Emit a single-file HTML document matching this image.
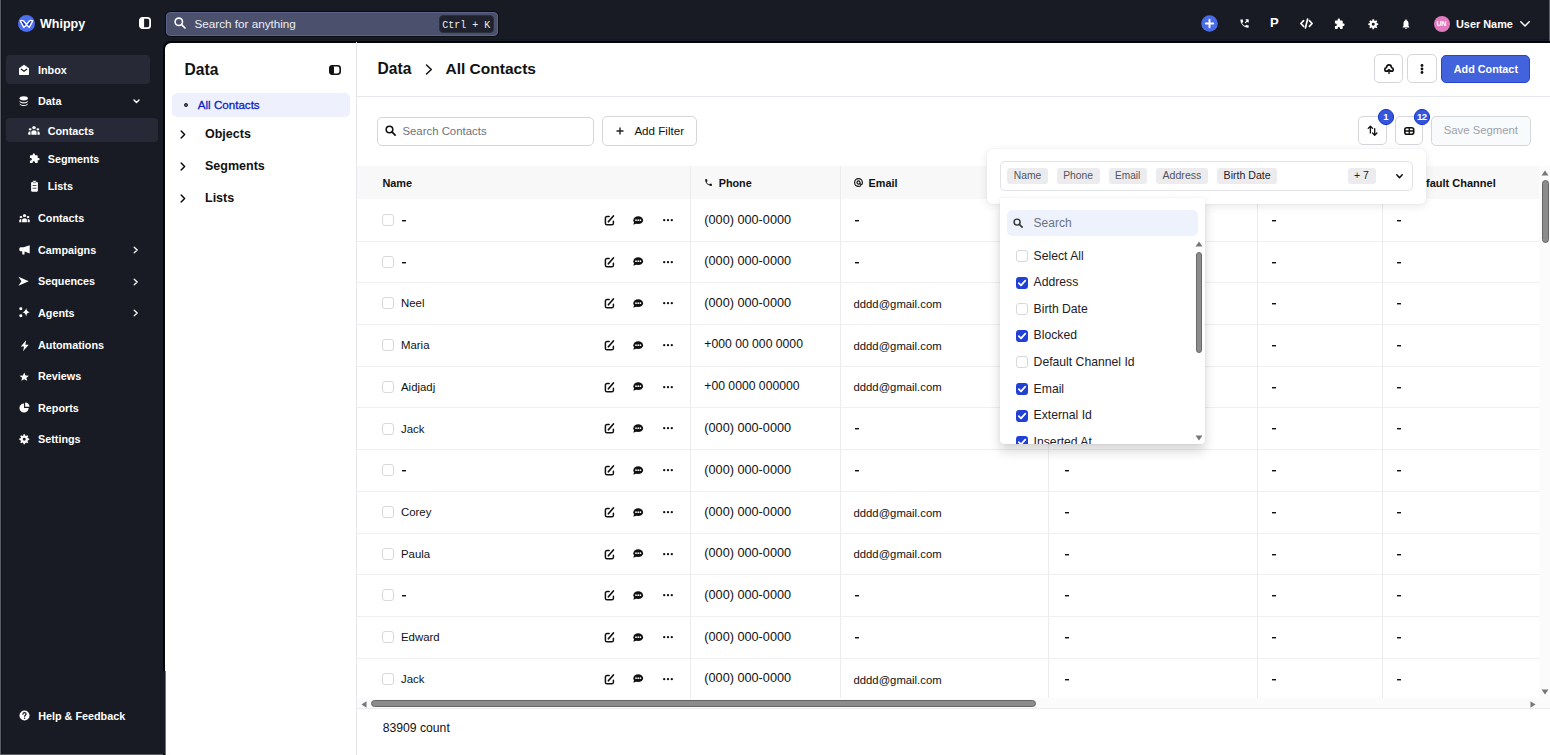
<!DOCTYPE html>
<html><head><meta charset="utf-8">
<style>
*{box-sizing:border-box;margin:0;padding:0}
html,body{width:1550px;height:755px;overflow:hidden;background:#181b23;font-family:"Liberation Sans",sans-serif;position:relative}
.a{position:absolute;white-space:nowrap}
.sb{position:absolute;font-weight:bold;font-size:10.8px;color:#fff;white-space:nowrap;line-height:13px}
.si{position:absolute;display:block;fill:#fff}
svg{display:block;overflow:visible}
.bt{position:absolute;border:1px solid #dcdde1;border-radius:4px;background:#fff}
.cell{position:absolute;font-size:12.7px;color:#111;white-space:nowrap;line-height:14px}
.cb{position:absolute;width:12px;height:12px;border:1px solid #d6d8dc;border-radius:3px;background:#fff}
.cbk{position:absolute;width:12px;height:12px;border-radius:3px;background:#2141d6}
.vl{position:absolute;width:1px;background:#ececee}
.hl{position:absolute;height:1px;background:#ececee}
.tag{position:absolute;height:16px;border-radius:3px;background:#ececef;font-size:10.3px;color:#4f5461;line-height:16px;white-space:nowrap}
.it{position:absolute;font-size:12.2px;color:#222;white-space:nowrap;line-height:14px}
</style></head><body>

<div class="a" style="left:0px;top:0px;width:1px;height:755px;background:#5b5e65"></div>
<div class="a" style="left:1px;top:0px;width:1px;height:755px;background:#13151c"></div>
<div class="a" style="left:0px;top:754px;width:165px;height:1px;background:#5b5e65"></div>
<div class="a" style="left:1549px;top:0px;width:1px;height:42px;background:#5b5e65"></div>
<div class="a" style="left:170px;top:39px;width:1379px;height:1px;background:#14161d"></div>
<svg class="a" style="left:18px;top:15px;" width="17" height="17" viewBox="0 0 17 17" preserveAspectRatio="none"><circle cx="8.5" cy="8.5" r="8.5" fill="#4c6ff0"/><path d="M2.3 5.8 C3.5 5.2 4.8 5.3 5.6 6 L8.5 9.6 L11.4 6 C12.2 5.3 13.5 5.2 14.7 5.8 L11.2 12.3 L8.5 9.9 L5.8 12.3 Z" fill="#1230d0" stroke="#fff" stroke-width="1.4" stroke-linejoin="round"/></svg>
<div class="a" style="left:40.00px;top:15.97px;font-size:12.5px;line-height:16px;color:#fff;font-weight:bold;">Whippy</div>
<svg class="a" style="left:139px;top:17px;" width="12" height="12" viewBox="0 0 12 12" preserveAspectRatio="none"><rect x="0.9" y="0.9" width="10.2" height="10.2" rx="2.6" fill="none" stroke="#fff" stroke-width="1.8"/><rect x="0.9" y="0.9" width="4.2" height="10.2" rx="1" fill="#fff"/></svg>
<div class="a" style="left:166px;top:12px;width:332px;height:24px;background:#4b506c;border:1px solid #5d6387;border-radius:4px;box-shadow:0 0 0 1px #0b0d12"></div>
<svg class="a" style="left:174px;top:17px;" width="12" height="12" viewBox="0 0 12 12" preserveAspectRatio="none"><circle cx="4.8" cy="4.8" r="3.7" fill="none" stroke="#fff" stroke-width="1.6"/><path d="M7.6 7.6 L11 11" stroke="#fff" stroke-width="1.7" stroke-linecap="round"/></svg>
<div class="a" style="left:194.50px;top:16.45px;font-size:11.7px;line-height:15px;color:#eceef4;font-weight:normal;">Search for anything</div>
<div class="a" style="left:439px;top:15px;width:55px;height:18px;background:#1f222d;border:1px solid #2c303e;border-radius:4px"></div>
<div class="a" style="left:442.30px;top:19.54px;font-size:10px;line-height:12px;color:#eceef4;font-weight:normal;font-family:'Liberation Mono',monospace;">Ctrl + K</div>
<svg class="a" style="left:1201px;top:15px;" width="17" height="17" viewBox="0 0 17 17" preserveAspectRatio="none"><circle cx="8.5" cy="8.5" r="8.3" fill="#4a6be6"/><path d="M8.5 4.8 V12.2 M4.8 8.5 H12.2" stroke="#fff" stroke-width="1.9" stroke-linecap="round"/></svg>
<svg class="a" style="left:1239px;top:18px;" width="11" height="11" viewBox="0 0 24 24" preserveAspectRatio="none"><path d="M6.6 10.8c1.4 2.8 3.8 5.1 6.6 6.6l2.2-2.2c.3-.3.7-.4 1-.2 1.1.4 2.3.6 3.6.6.6 0 1 .4 1 1V20c0 .6-.4 1-1 1C10.6 21 3 13.4 3 4c0-.6.4-1 1-1h3.5c.6 0 1 .4 1 1 0 1.3.2 2.5.6 3.6.1.3 0 .7-.2 1z" fill="#fff"/><path d="M14 10 L20 4 M15.5 4 H20 V8.5" stroke="#fff" stroke-width="2.4" fill="none" stroke-linecap="round" stroke-linejoin="round"/></svg>
<div class="a" style="left:1270.00px;top:15.10px;font-size:13px;line-height:16px;color:#fff;font-weight:bold;">P</div>
<svg class="a" style="left:1300px;top:18px;" width="13" height="11" viewBox="0 0 13 11" preserveAspectRatio="none"><path d="M3.6 2.6 L0.9 5.5 L3.6 8.4 M9.4 2.6 L12.1 5.5 L9.4 8.4 M7.6 1 L5.4 10" stroke="#fff" stroke-width="1.7" fill="none" stroke-linecap="round" stroke-linejoin="round"/></svg>
<svg class="a" style="left:1334px;top:18px;" width="11" height="12" viewBox="0 0 24 24" preserveAspectRatio="none"><path d="M20.5 11H19V7c0-1.1-.9-2-2-2h-4V3.5C13 2.1 11.9 1 10.5 1S8 2.1 8 3.5V5H4c-1.1 0-2 .9-2 2v3.8h1.5c1.5 0 2.7 1.2 2.7 2.7S5 16.2 3.5 16.2H2V20c0 1.1.9 2 2 2h3.8v-1.5c0-1.5 1.2-2.7 2.7-2.7s2.7 1.2 2.7 2.7V22H17c1.1 0 2-.9 2-2v-4h1.5c1.4 0 2.5-1.1 2.5-2.5S21.9 11 20.5 11z" fill="#fff"/></svg>
<svg class="a" style="left:1367.5px;top:18.5px;" width="10.5" height="10.5" viewBox="0 0 24 24" preserveAspectRatio="none"><path fill-rule="evenodd" d="M20.34 9.91 L23.34 10.11 L23.34 13.89 L20.34 14.09 L19.37 16.42 L21.36 18.69 L18.69 21.36 L16.42 19.37 L14.09 20.34 L13.89 23.34 L10.11 23.34 L9.91 20.34 L7.58 19.37 L5.31 21.36 L2.64 18.69 L4.63 16.42 L3.66 14.09 L0.66 13.89 L0.66 10.11 L3.66 9.91 L4.63 7.58 L2.64 5.31 L5.31 2.64 L7.58 4.63 L9.91 3.66 L10.11 0.66 L13.89 0.66 L14.09 3.66 L16.42 4.63 L18.69 2.64 L21.36 5.31 L19.37 7.58Z M15.4 12 A3.4 3.4 0 1 0 8.6 12 A3.4 3.4 0 1 0 15.4 12Z" fill="#fff"/></svg>
<svg class="a" style="left:1401px;top:18px;" width="10" height="12" viewBox="0 0 24 24" preserveAspectRatio="none"><path d="M12 22c1.1 0 2-.9 2-2h-4c0 1.1.9 2 2 2zm6-6v-5c0-3.07-1.64-5.64-4.5-6.32V4c0-.83-.67-1.5-1.5-1.5s-1.5.67-1.5 1.5v.68C7.63 5.36 6 7.92 6 11v5l-2 2v1h16v-1l-2-2z" fill="#fff"/></svg>
<svg class="a" style="left:1434px;top:16px;" width="16" height="16" viewBox="0 0 16 16" preserveAspectRatio="none"><circle cx="8" cy="8" r="8" fill="#e27ac0"/></svg>
<div class="a" style="left:1436.60px;top:19.27px;font-size:7px;line-height:9px;color:#fff;font-weight:bold;letter-spacing:-0.3px">UN</div>
<div class="a" style="left:1456.00px;top:16.82px;font-size:10.9px;line-height:14px;color:#fff;font-weight:bold;">User Name</div>
<svg class="a" style="left:1520px;top:21px;" width="10" height="6" viewBox="0 0 10 6" preserveAspectRatio="none"><path d="M0.8 0.8 L5 5 L9.2 0.8" stroke="#fff" stroke-width="1.5" fill="none" stroke-linecap="round" stroke-linejoin="round"/></svg>
<div class="a" style="left:6px;top:55px;width:144px;height:29px;background:#272a36;border-radius:4px"></div>
<div class="a" style="left:6px;top:118px;width:152px;height:24px;background:#272a36;border-radius:4px"></div>
<svg class="a" style="left:18px;top:64px;" width="12" height="12" viewBox="0 0 24 24" preserveAspectRatio="none"><path d="M12 1.5 L22 8.5 V20 c0 1.1-.9 2-2 2 H4 c-1.1 0-2-.9-2-2 V8.5 Z" fill="#fff"/><path d="M6.5 10.5 L12 14.5 L17.5 10.5" stroke="#181b23" stroke-width="2.4" fill="none" stroke-linecap="round" stroke-linejoin="round"/></svg>
<div class="a" style="left:38.00px;top:62.86px;font-size:10.8px;line-height:14px;color:#fff;font-weight:bold;">Inbox</div>
<svg class="a" style="left:19px;top:96px;" width="9.5" height="10" viewBox="0 0 24 24" preserveAspectRatio="none"><ellipse cx="12" cy="5.5" rx="10.5" ry="5" fill="#fff"/><path d="M1.5 10.8 c1.2 2.6 5 4.2 10.5 4.2 s9.3-1.6 10.5-4.2 V13.2 c-1.2 3-5 4.6-10.5 4.6 s-9.3-1.6-10.5-4.6Z" fill="#fff"/><path d="M1.5 17.4 c1.2 2.6 5 4.2 10.5 4.2 s9.3-1.6 10.5-4.2 V19.4 c-1.2 3-5 4.6-10.5 4.6 s-9.3-1.6-10.5-4.6Z" fill="#fff"/></svg>
<div class="a" style="left:38.00px;top:94.26px;font-size:10.8px;line-height:14px;color:#fff;font-weight:bold;">Data</div>
<svg class="a" style="left:27.5px;top:125.5px;" width="12" height="9.5" viewBox="0 0 24 24" preserveAspectRatio="none"><circle cx="12" cy="4.5" r="3.6" fill="#fff"/><circle cx="4.3" cy="8.3" r="2.9" fill="#fff"/><circle cx="19.7" cy="8.3" r="2.9" fill="#fff"/><path d="M6.8 22 v-6 c0-2.9 2.3-5 5.2-5 s5.2 2.1 5.2 5 V22 Z" fill="#fff"/><path d="M0.5 22 v-4 c0-3 1.7-5 4.3-5 L5.2 22Z" fill="#fff"/><path d="M23.5 22 v-4 c0-3-1.7-5-4.3-5 L18.8 22Z" fill="#fff"/></svg>
<div class="a" style="left:47.70px;top:123.76px;font-size:10.8px;line-height:14px;color:#fff;font-weight:bold;">Contacts</div>
<svg class="a" style="left:28.5px;top:152.5px;" width="11" height="11" viewBox="0 0 24 24" preserveAspectRatio="none"><path d="M20.5 11H19V7c0-1.1-.9-2-2-2h-4V3.5C13 2.1 11.9 1 10.5 1S8 2.1 8 3.5V5H4c-1.1 0-2 .9-2 2v3.8h1.5c1.5 0 2.7 1.2 2.7 2.7S5 16.2 3.5 16.2H2V20c0 1.1.9 2 2 2h3.8v-1.5c0-1.5 1.2-2.7 2.7-2.7s2.7 1.2 2.7 2.7V22H17c1.1 0 2-.9 2-2v-4h1.5c1.4 0 2.5-1.1 2.5-2.5S21.9 11 20.5 11z" fill="#fff"/></svg>
<div class="a" style="left:47.70px;top:151.56px;font-size:10.8px;line-height:14px;color:#fff;font-weight:bold;">Segments</div>
<svg class="a" style="left:30px;top:179.5px;" width="9" height="12" viewBox="0 0 24 24" preserveAspectRatio="none"><rect x="3" y="3.5" width="18" height="20" rx="3" fill="#fff"/><rect x="8" y="1" width="8" height="4.5" rx="1.5" fill="#fff" stroke="#181b23" stroke-width="1.2"/><path d="M7 11 H17 M7 16.5 H17" stroke="#181b23" stroke-width="1.8"/></svg>
<div class="a" style="left:47.70px;top:179.46px;font-size:10.8px;line-height:14px;color:#fff;font-weight:bold;">Lists</div>
<svg class="a" style="left:18.5px;top:213.5px;" width="11" height="9" viewBox="0 0 24 24" preserveAspectRatio="none"><circle cx="12" cy="4.5" r="3.6" fill="#fff"/><circle cx="4.3" cy="8.3" r="2.9" fill="#fff"/><circle cx="19.7" cy="8.3" r="2.9" fill="#fff"/><path d="M6.8 22 v-6 c0-2.9 2.3-5 5.2-5 s5.2 2.1 5.2 5 V22 Z" fill="#fff"/><path d="M0.5 22 v-4 c0-3 1.7-5 4.3-5 L5.2 22Z" fill="#fff"/><path d="M23.5 22 v-4 c0-3-1.7-5-4.3-5 L18.8 22Z" fill="#fff"/></svg>
<div class="a" style="left:38.00px;top:211.46px;font-size:10.8px;line-height:14px;color:#fff;font-weight:bold;">Contacts</div>
<svg class="a" style="left:18.5px;top:244.5px;" width="11" height="10" viewBox="0 0 11 10" preserveAspectRatio="none"><path d="M10.7 0.2 V8.5 L5.6 6.5 L5.5 9.6 H3.3 L3.2 6.3 H1.8 C0.9 6.3 0.3 5.5 0.3 4.4 C0.3 3.2 0.9 2.3 1.8 2.3 H4.6 Z" fill="#fff"/></svg>
<div class="a" style="left:38.00px;top:243.06px;font-size:10.8px;line-height:14px;color:#fff;font-weight:bold;">Campaigns</div>
<svg class="a" style="left:18px;top:275.5px;" width="11" height="10.5" viewBox="0 0 24 24" preserveAspectRatio="none"><path d="M1 1.5 L23.5 12 L1 22.5 L7.5 12Z" fill="#fff"/></svg>
<div class="a" style="left:38.00px;top:274.26px;font-size:10.8px;line-height:14px;color:#fff;font-weight:bold;">Sequences</div>
<svg class="a" style="left:18.5px;top:306.5px;" width="11" height="10.5" viewBox="0 0 24 24" preserveAspectRatio="none"><path d="M15.5 2.5 Q16.5 10.5 23.5 12 Q16.5 13.5 15.5 21.5 Q14.5 13.5 7.5 12 Q14.5 10.5 15.5 2.5Z" fill="#fff"/><circle cx="4" cy="4" r="3.4" fill="#fff"/><circle cx="4" cy="20" r="3.4" fill="#fff"/></svg>
<div class="a" style="left:38.00px;top:306.06px;font-size:10.8px;line-height:14px;color:#fff;font-weight:bold;">Agents</div>
<svg class="a" style="left:19.5px;top:339.5px;" width="9.5" height="11.5" viewBox="0 0 24 24" preserveAspectRatio="none"><path d="M15.5 0.5 L2 13.8 H10.5 L7.5 23.5 L22 9.8 H13.5 Z" fill="#fff"/></svg>
<div class="a" style="left:38.00px;top:337.66px;font-size:10.8px;line-height:14px;color:#fff;font-weight:bold;">Automations</div>
<svg class="a" style="left:19px;top:371.5px;" width="10.5" height="9.5" viewBox="0 0 24 24" preserveAspectRatio="none"><path d="M12 1.5 L15 8.6 L22.8 9.3 L16.9 14.4 L18.7 22 L12 18 L5.3 22 L7.1 14.4 L1.2 9.3 L9 8.6Z" fill="#fff"/></svg>
<div class="a" style="left:38.00px;top:369.26px;font-size:10.8px;line-height:14px;color:#fff;font-weight:bold;">Reviews</div>
<svg class="a" style="left:18.5px;top:402px;" width="11" height="11" viewBox="0 0 24 24" preserveAspectRatio="none"><path d="M11 3 A10 10 0 1 0 21 13 H11Z" fill="#fff"/><path d="M13.5 1 A9.5 9.5 0 0 1 23 10.5 H13.5Z" fill="#fff"/></svg>
<div class="a" style="left:38.00px;top:400.86px;font-size:10.8px;line-height:14px;color:#fff;font-weight:bold;">Reports</div>
<svg class="a" style="left:19px;top:434px;" width="10.5" height="10.5" viewBox="0 0 24 24" preserveAspectRatio="none"><path fill-rule="evenodd" d="M20.34 9.91 L23.34 10.11 L23.34 13.89 L20.34 14.09 L19.37 16.42 L21.36 18.69 L18.69 21.36 L16.42 19.37 L14.09 20.34 L13.89 23.34 L10.11 23.34 L9.91 20.34 L7.58 19.37 L5.31 21.36 L2.64 18.69 L4.63 16.42 L3.66 14.09 L0.66 13.89 L0.66 10.11 L3.66 9.91 L4.63 7.58 L2.64 5.31 L5.31 2.64 L7.58 4.63 L9.91 3.66 L10.11 0.66 L13.89 0.66 L14.09 3.66 L16.42 4.63 L18.69 2.64 L21.36 5.31 L19.37 7.58Z M15.4 12 A3.4 3.4 0 1 0 8.6 12 A3.4 3.4 0 1 0 15.4 12Z" fill="#fff"/></svg>
<div class="a" style="left:38.00px;top:432.46px;font-size:10.8px;line-height:14px;color:#fff;font-weight:bold;">Settings</div>
<svg class="a" style="left:18.5px;top:709.5px;" width="11" height="11" viewBox="0 0 24 24" preserveAspectRatio="none"><circle cx="12" cy="12" r="11" fill="#fff"/><path d="M8.6 9.2 c0-2 1.5-3.4 3.5-3.4 s3.4 1.3 3.4 3.1 c0 2.4-3.2 2.6-3.2 5" stroke="#181b23" stroke-width="2.6" fill="none" stroke-linecap="round"/><circle cx="12.3" cy="18" r="1.6" fill="#181b23"/></svg>
<div class="a" style="left:38.20px;top:709.26px;font-size:10.8px;line-height:14px;color:#fff;font-weight:bold;">Help &amp; Feedback</div>
<svg class="a" style="left:132.5px;top:98.5px;" width="7" height="5" viewBox="0 0 7 5" preserveAspectRatio="none"><path d="M1 1 L3.5 3.6 L6 1" stroke="#fff" stroke-width="1.4" fill="none" stroke-linecap="round" stroke-linejoin="round"/></svg>
<svg class="a" style="left:133px;top:246px;" width="5.5" height="8" viewBox="0 0 5.5 8" preserveAspectRatio="none"><path d="M1.2 1.2 L4.2 4 L1.2 6.8" stroke="#fff" stroke-width="1.3" fill="none" stroke-linecap="round" stroke-linejoin="round"/></svg>
<svg class="a" style="left:133px;top:277.5px;" width="5.5" height="8" viewBox="0 0 5.5 8" preserveAspectRatio="none"><path d="M1.2 1.2 L4.2 4 L1.2 6.8" stroke="#fff" stroke-width="1.3" fill="none" stroke-linecap="round" stroke-linejoin="round"/></svg>
<svg class="a" style="left:133px;top:309px;" width="5.5" height="8" viewBox="0 0 5.5 8" preserveAspectRatio="none"><path d="M1.2 1.2 L4.2 4 L1.2 6.8" stroke="#fff" stroke-width="1.3" fill="none" stroke-linecap="round" stroke-linejoin="round"/></svg>
<div class="a" style="left:163px;top:41px;width:1387px;height:714px;background:#fff;border-left:2px solid #050609;border-top:2px solid #050609;border-top-left-radius:8px"></div>
<div class="a" style="left:184.50px;top:59.99px;font-size:15.6px;line-height:20px;color:#111;font-weight:bold;">Data</div>
<svg class="a" style="left:329px;top:65px;" width="12" height="10" viewBox="0 0 12 10" preserveAspectRatio="none"><rect x="0.8" y="0.8" width="10.4" height="8.4" rx="2.6" fill="none" stroke="#111" stroke-width="1.6"/><rect x="0.8" y="0.8" width="4.2" height="8.4" rx="1.5" fill="#111"/></svg>
<div class="a" style="left:172px;top:93px;width:178px;height:24px;background:#eef1fd;border-radius:5px"></div>
<svg class="a" style="left:184px;top:103px;" width="4" height="4" viewBox="0 0 4 4" preserveAspectRatio="none"><circle cx="2" cy="2" r="1.6" fill="#555" stroke="#111" stroke-width="0.8"/></svg>
<div class="a" style="left:197.80px;top:97.98px;font-size:11.6px;line-height:14px;color:#0b1fc4;font-weight:normal;-webkit-text-stroke:0.3px #0b1fc4">All Contacts</div>
<div class="a" style="left:205.00px;top:125.97px;font-size:12.5px;line-height:16px;color:#111;font-weight:bold;">Objects</div>
<svg class="a" style="left:179.5px;top:130.0px;" width="6" height="9" viewBox="0 0 6 9" preserveAspectRatio="none"><path d="M1.2 1 L4.6 4.5 L1.2 8" stroke="#111" stroke-width="1.6" fill="none" stroke-linecap="round" stroke-linejoin="round"/></svg>
<div class="a" style="left:205.00px;top:157.97px;font-size:12.5px;line-height:16px;color:#111;font-weight:bold;">Segments</div>
<svg class="a" style="left:179.5px;top:162.0px;" width="6" height="9" viewBox="0 0 6 9" preserveAspectRatio="none"><path d="M1.2 1 L4.6 4.5 L1.2 8" stroke="#111" stroke-width="1.6" fill="none" stroke-linecap="round" stroke-linejoin="round"/></svg>
<div class="a" style="left:205.00px;top:189.67px;font-size:12.5px;line-height:16px;color:#111;font-weight:bold;">Lists</div>
<svg class="a" style="left:179.5px;top:193.5px;" width="6" height="9" viewBox="0 0 6 9" preserveAspectRatio="none"><path d="M1.2 1 L4.6 4.5 L1.2 8" stroke="#111" stroke-width="1.6" fill="none" stroke-linecap="round" stroke-linejoin="round"/></svg>
<div class="a" style="left:356px;top:42px;width:1px;height:713px;background:#e6e7ea"></div>
<div class="a" style="left:357px;top:96px;width:1193px;height:1px;background:#e6e7ea"></div>
<div class="a" style="left:377.50px;top:58.69px;font-size:15.6px;line-height:20px;color:#111;font-weight:bold;">Data</div>
<svg class="a" style="left:424.5px;top:64px;" width="8" height="11" viewBox="0 0 8 11" preserveAspectRatio="none"><path d="M1.5 1 L6.3 5.5 L1.5 10" stroke="#111" stroke-width="1.5" fill="none" stroke-linecap="round" stroke-linejoin="round"/></svg>
<div class="a" style="left:445.50px;top:59.23px;font-size:15.5px;line-height:19px;color:#111;font-weight:bold;">All Contacts</div>
<div class="a" style="left:1374px;top:54px;width:29px;height:29px;border:1px solid #d5d7db;border-radius:5px;background:#fff"></div>
<svg class="a" style="left:1384px;top:64px;" width="10" height="10" viewBox="0 0 10 10" preserveAspectRatio="none"><path d="M3.6 7.2 H2.5 C1.4 7.2 0.8 6.4 0.8 5.5 C0.8 4.5 1.5 3.8 2.4 3.7 C2.6 2.1 3.6 0.9 5 0.9 C6.4 0.9 7.4 2.1 7.6 3.6 C8.6 3.7 9.2 4.5 9.2 5.5 C9.2 6.5 8.5 7.2 7.5 7.2 H6.4" stroke="#111" stroke-width="1.7" fill="none" stroke-linecap="round" stroke-linejoin="round"/><path d="M5 9.6 V5.6 M3.3 7 L5 5.4 L6.7 7" stroke="#111" stroke-width="1.4" fill="none" stroke-linecap="round" stroke-linejoin="round"/></svg>
<div class="a" style="left:1407px;top:54px;width:30px;height:29px;border:1px solid #d5d7db;border-radius:5px;background:#fff"></div>
<svg class="a" style="left:1420px;top:64px;" width="4" height="10" viewBox="0 0 4 10" preserveAspectRatio="none"><circle cx="2" cy="1.5" r="1.4" fill="#111"/><circle cx="2" cy="5" r="1.4" fill="#111"/><circle cx="2" cy="8.5" r="1.4" fill="#111"/></svg>
<div class="a" style="left:1441px;top:55px;width:89px;height:28px;background:#4263dc;border:1px solid #2546d4;border-radius:5px"></div>
<div class="a" style="left:1453.80px;top:62.26px;font-size:10.8px;line-height:14px;color:#fff;font-weight:bold;">Add Contact</div>
<div class="a" style="left:377px;top:117px;width:217px;height:29px;border:1px solid #d5d7db;border-radius:5px;background:#fff"></div>
<svg class="a" style="left:385px;top:125px;" width="11" height="11" viewBox="0 0 12 12" preserveAspectRatio="none"><circle cx="4.9" cy="4.9" r="3.6" fill="none" stroke="#111" stroke-width="1.7"/><path d="M7.6 7.6 L11 11" stroke="#111" stroke-width="1.9" stroke-linecap="round"/></svg>
<div class="a" style="left:402.40px;top:123.85px;font-size:11.4px;line-height:14px;color:#6b7280;font-weight:normal;">Search Contacts</div>
<div class="a" style="left:602px;top:116px;width:95px;height:30px;border:1px solid #d5d7db;border-radius:5px;background:#fff"></div>
<svg class="a" style="left:616px;top:127px;" width="8" height="8" viewBox="0 0 8 8" preserveAspectRatio="none"><path d="M4 0.5 V7.5 M0.5 4 H7.5" stroke="#222" stroke-width="1.4"/></svg>
<div class="a" style="left:634.40px;top:123.78px;font-size:11.6px;line-height:14px;color:#111;font-weight:normal;">Add Filter</div>
<div class="a" style="left:1358px;top:116px;width:29px;height:29px;border:1px solid #d5d7db;border-radius:5px;background:#fff"></div>
<svg class="a" style="left:1367px;top:125px;" width="11" height="11" viewBox="0 0 11 11" preserveAspectRatio="none"><path d="M3.4 7.9 V1.4 M1.2 3.4 L3.4 1.2 L5.6 3.4 M7.7 3.6 V10 M5.5 8 L7.7 10.2 L9.9 8" stroke="#111" stroke-width="1.3" fill="none" stroke-linecap="round" stroke-linejoin="round"/></svg>
<div class="a" style="left:1395px;top:116px;width:28px;height:29px;border:1px solid #d5d7db;border-radius:5px;background:#fff"></div>
<svg class="a" style="left:1403.5px;top:127px;" width="10.5" height="8" viewBox="0 0 10.5 8" preserveAspectRatio="none"><rect x="0.8" y="0.8" width="8.9" height="6.4" rx="2" fill="none" stroke="#111" stroke-width="1.6"/><path d="M0.8 4 H9.7 M5.25 0.8 V7.2" stroke="#111" stroke-width="1.3"/></svg>
<div class="a" style="left:1431px;top:116px;width:100px;height:30px;border:1px solid #d5d7db;border-radius:5px;background:#f9fafb"></div>
<div class="a" style="left:1443.80px;top:123.48px;font-size:11.3px;line-height:14px;color:#9ca1ab;font-weight:normal;">Save Segment</div>
<svg class="a" style="left:1378px;top:109px;" width="16" height="16" viewBox="0 0 16 16" preserveAspectRatio="none"><circle cx="8" cy="8" r="7.6" fill="#3656da" stroke="#1534cf" stroke-width="1"/></svg>
<div class="a" style="left:1383.15px;top:111.21px;font-size:9.5px;line-height:12px;color:#fff;font-weight:bold;letter-spacing:0px">1</div>
<svg class="a" style="left:1414px;top:109px;" width="16" height="16" viewBox="0 0 16 16" preserveAspectRatio="none"><circle cx="8" cy="8" r="7.6" fill="#3656da" stroke="#1534cf" stroke-width="1"/></svg>
<div class="a" style="left:1417.05px;top:111.21px;font-size:9.5px;line-height:12px;color:#fff;font-weight:bold;letter-spacing:-0.6px">12</div>
<div class="a" style="left:382.70px;top:721.47px;font-size:12.2px;line-height:15px;color:#111;font-weight:normal;">83909 count</div>
<div class="a" style="left:357px;top:166px;width:1182px;height:33px;background:#f8f8f9"></div>
<div class="a" style="left:1539px;top:166px;width:11px;height:532px;background:#fbfbfb"></div>
<div class="a" style="left:690px;top:166px;width:1px;height:532px;background:#ececee"></div>
<div class="a" style="left:840px;top:166px;width:1px;height:532px;background:#ececee"></div>
<div class="a" style="left:1048px;top:166px;width:1px;height:532px;background:#ececee"></div>
<div class="a" style="left:1257px;top:166px;width:1px;height:532px;background:#ececee"></div>
<div class="a" style="left:1382px;top:166px;width:1px;height:532px;background:#ececee"></div>
<div class="a" style="left:357px;top:240.50px;width:1182px;height:1px;background:#efeff1"></div>
<div class="a" style="left:357px;top:282.22px;width:1182px;height:1px;background:#efeff1"></div>
<div class="a" style="left:357px;top:323.94px;width:1182px;height:1px;background:#efeff1"></div>
<div class="a" style="left:357px;top:365.66px;width:1182px;height:1px;background:#efeff1"></div>
<div class="a" style="left:357px;top:407.38px;width:1182px;height:1px;background:#efeff1"></div>
<div class="a" style="left:357px;top:449.10px;width:1182px;height:1px;background:#efeff1"></div>
<div class="a" style="left:357px;top:490.82px;width:1182px;height:1px;background:#efeff1"></div>
<div class="a" style="left:357px;top:532.54px;width:1182px;height:1px;background:#efeff1"></div>
<div class="a" style="left:357px;top:574.26px;width:1182px;height:1px;background:#efeff1"></div>
<div class="a" style="left:357px;top:615.98px;width:1182px;height:1px;background:#efeff1"></div>
<div class="a" style="left:357px;top:657.70px;width:1182px;height:1px;background:#efeff1"></div>
<div class="a" style="left:382.40px;top:176.02px;font-size:10.9px;line-height:14px;color:#111;font-weight:bold;">Name</div>
<svg class="a" style="left:704px;top:178px;" width="9" height="9" viewBox="0 0 24 24" preserveAspectRatio="none"><path d="M6.6 10.8c1.4 2.8 3.8 5.1 6.6 6.6l2.2-2.2c.3-.3.7-.4 1-.2 1.1.4 2.3.6 3.6.6.6 0 1 .4 1 1V20c0 .6-.4 1-1 1C10.6 21 3 13.4 3 4c0-.6.4-1 1-1h3.5c.6 0 1 .4 1 1 0 1.3.2 2.5.6 3.6.1.3 0 .7-.2 1z" fill="#111"/></svg>
<div class="a" style="left:718.70px;top:176.06px;font-size:10.8px;line-height:14px;color:#111;font-weight:bold;">Phone</div>
<svg class="a" style="left:854px;top:178px;" width="9" height="9" viewBox="0 0 10 10" preserveAspectRatio="none"><path d="M7.6 8.6 C6.9 9.1 6 9.3 5 9.3 C2.6 9.3 0.7 7.4 0.7 5 C0.7 2.6 2.6 0.7 5 0.7 C7.4 0.7 9.3 2.6 9.3 5 V5.8 C9.3 6.6 8.7 7.2 8 7.2 C7.3 7.2 6.7 6.6 6.7 5.8 V5 M6.7 5 C6.7 6 5.9 6.8 5 6.8 C4.1 6.8 3.3 6 3.3 5 C3.3 4 4.1 3.2 5 3.2 C5.9 3.2 6.7 4 6.7 5" stroke="#111" stroke-width="1.3" fill="none" stroke-linecap="round"/></svg>
<div class="a" style="left:868.60px;top:176.06px;font-size:10.8px;line-height:14px;color:#111;font-weight:bold;">Email</div>
<div class="a" style="left:1412.00px;top:175.99px;font-size:11px;line-height:14px;color:#111;font-weight:bold;">Default Channel</div>
<div class="cb" style="left:382px;top:214.00px"></div>
<div class="a" style="left:402px;top:220px;width:4px;height:1px;background:#111"></div>
<div class="a" style="left:402px;top:221px;width:4px;height:1px;background:#9a9a9a"></div>
<svg class="a" style="left:604px;top:214.8px;" width="10.5" height="10.5" viewBox="0 0 10.5 10.5" preserveAspectRatio="none"><path d="M5.2 1.6 H3 C2 1.6 1.4 2.2 1.4 3.2 V8.2 C1.4 9.2 2 9.8 3 9.8 H7.8 C8.8 9.8 9.4 9.2 9.4 8.2 V6.2" stroke="#111" stroke-width="1.5" fill="none" stroke-linecap="round"/><path d="M4.4 6.8 L9.4 1" stroke="#111" stroke-width="1.7" stroke-linecap="round"/></svg>
<svg class="a" style="left:633px;top:215.5px;" width="10.5" height="9" viewBox="0 0 10.5 9" preserveAspectRatio="none"><ellipse cx="5.2" cy="4.2" rx="4.9" ry="3.9" fill="#111"/><path d="M1.2 5.5 L0.4 8.8 L3.6 7.6Z" fill="#111"/><circle cx="3" cy="4.2" r="0.85" fill="#fff"/><circle cx="5.2" cy="4.2" r="0.85" fill="#fff"/><circle cx="7.4" cy="4.2" r="0.85" fill="#fff"/></svg>
<svg class="a" style="left:662.5px;top:218.8px;" width="10" height="2.4" viewBox="0 0 10 2.4" preserveAspectRatio="none"><circle cx="1.2" cy="1.2" r="1.15" fill="#111"/><circle cx="5" cy="1.2" r="1.15" fill="#111"/><circle cx="8.8" cy="1.2" r="1.15" fill="#111"/></svg>
<div class="a" style="left:704.30px;top:211.50px;font-size:12.7px;line-height:16px;color:#111;font-weight:normal;">(000) 000-0000</div>
<div class="a" style="left:855px;top:220px;width:4px;height:1px;background:#111"></div>
<div class="a" style="left:855px;top:221px;width:4px;height:1px;background:#9a9a9a"></div>
<div class="a" style="left:1065px;top:220px;width:4px;height:1px;background:#111"></div>
<div class="a" style="left:1065px;top:221px;width:4px;height:1px;background:#9a9a9a"></div>
<div class="a" style="left:1272px;top:220px;width:4px;height:1px;background:#111"></div>
<div class="a" style="left:1272px;top:221px;width:4px;height:1px;background:#9a9a9a"></div>
<div class="a" style="left:1397px;top:220px;width:4px;height:1px;background:#111"></div>
<div class="a" style="left:1397px;top:221px;width:4px;height:1px;background:#9a9a9a"></div>
<div class="cb" style="left:382px;top:255.72px"></div>
<div class="a" style="left:402px;top:262px;width:4px;height:1px;background:#111"></div>
<div class="a" style="left:402px;top:263px;width:4px;height:1px;background:#9a9a9a"></div>
<svg class="a" style="left:604px;top:256.52000000000004px;" width="10.5" height="10.5" viewBox="0 0 10.5 10.5" preserveAspectRatio="none"><path d="M5.2 1.6 H3 C2 1.6 1.4 2.2 1.4 3.2 V8.2 C1.4 9.2 2 9.8 3 9.8 H7.8 C8.8 9.8 9.4 9.2 9.4 8.2 V6.2" stroke="#111" stroke-width="1.5" fill="none" stroke-linecap="round"/><path d="M4.4 6.8 L9.4 1" stroke="#111" stroke-width="1.7" stroke-linecap="round"/></svg>
<svg class="a" style="left:633px;top:257.22px;" width="10.5" height="9" viewBox="0 0 10.5 9" preserveAspectRatio="none"><ellipse cx="5.2" cy="4.2" rx="4.9" ry="3.9" fill="#111"/><path d="M1.2 5.5 L0.4 8.8 L3.6 7.6Z" fill="#111"/><circle cx="3" cy="4.2" r="0.85" fill="#fff"/><circle cx="5.2" cy="4.2" r="0.85" fill="#fff"/><circle cx="7.4" cy="4.2" r="0.85" fill="#fff"/></svg>
<svg class="a" style="left:662.5px;top:260.52000000000004px;" width="10" height="2.4" viewBox="0 0 10 2.4" preserveAspectRatio="none"><circle cx="1.2" cy="1.2" r="1.15" fill="#111"/><circle cx="5" cy="1.2" r="1.15" fill="#111"/><circle cx="8.8" cy="1.2" r="1.15" fill="#111"/></svg>
<div class="a" style="left:704.30px;top:253.22px;font-size:12.7px;line-height:16px;color:#111;font-weight:normal;">(000) 000-0000</div>
<div class="a" style="left:855px;top:262px;width:4px;height:1px;background:#111"></div>
<div class="a" style="left:855px;top:263px;width:4px;height:1px;background:#9a9a9a"></div>
<div class="a" style="left:1065px;top:262px;width:4px;height:1px;background:#111"></div>
<div class="a" style="left:1065px;top:263px;width:4px;height:1px;background:#9a9a9a"></div>
<div class="a" style="left:1272px;top:262px;width:4px;height:1px;background:#111"></div>
<div class="a" style="left:1272px;top:263px;width:4px;height:1px;background:#9a9a9a"></div>
<div class="a" style="left:1397px;top:262px;width:4px;height:1px;background:#111"></div>
<div class="a" style="left:1397px;top:263px;width:4px;height:1px;background:#9a9a9a"></div>
<div class="cb" style="left:382px;top:297.44px"></div>
<div class="a" style="left:401.00px;top:296.39px;font-size:11.4px;line-height:14px;color:#111;font-weight:normal;">Neel</div>
<svg class="a" style="left:604px;top:298.24px;" width="10.5" height="10.5" viewBox="0 0 10.5 10.5" preserveAspectRatio="none"><path d="M5.2 1.6 H3 C2 1.6 1.4 2.2 1.4 3.2 V8.2 C1.4 9.2 2 9.8 3 9.8 H7.8 C8.8 9.8 9.4 9.2 9.4 8.2 V6.2" stroke="#111" stroke-width="1.5" fill="none" stroke-linecap="round"/><path d="M4.4 6.8 L9.4 1" stroke="#111" stroke-width="1.7" stroke-linecap="round"/></svg>
<svg class="a" style="left:633px;top:298.94px;" width="10.5" height="9" viewBox="0 0 10.5 9" preserveAspectRatio="none"><ellipse cx="5.2" cy="4.2" rx="4.9" ry="3.9" fill="#111"/><path d="M1.2 5.5 L0.4 8.8 L3.6 7.6Z" fill="#111"/><circle cx="3" cy="4.2" r="0.85" fill="#fff"/><circle cx="5.2" cy="4.2" r="0.85" fill="#fff"/><circle cx="7.4" cy="4.2" r="0.85" fill="#fff"/></svg>
<svg class="a" style="left:662.5px;top:302.24px;" width="10" height="2.4" viewBox="0 0 10 2.4" preserveAspectRatio="none"><circle cx="1.2" cy="1.2" r="1.15" fill="#111"/><circle cx="5" cy="1.2" r="1.15" fill="#111"/><circle cx="8.8" cy="1.2" r="1.15" fill="#111"/></svg>
<div class="a" style="left:704.30px;top:294.94px;font-size:12.7px;line-height:16px;color:#111;font-weight:normal;">(000) 000-0000</div>
<div class="a" style="left:853.50px;top:297.02px;font-size:11.3px;line-height:14px;color:#111;font-weight:normal;">dddd@gmail.com</div>
<div class="a" style="left:1065px;top:303px;width:4px;height:1px;background:#111"></div>
<div class="a" style="left:1065px;top:304px;width:4px;height:1px;background:#9a9a9a"></div>
<div class="a" style="left:1272px;top:303px;width:4px;height:1px;background:#111"></div>
<div class="a" style="left:1272px;top:304px;width:4px;height:1px;background:#9a9a9a"></div>
<div class="a" style="left:1397px;top:303px;width:4px;height:1px;background:#111"></div>
<div class="a" style="left:1397px;top:304px;width:4px;height:1px;background:#9a9a9a"></div>
<div class="cb" style="left:382px;top:339.16px"></div>
<div class="a" style="left:401.00px;top:338.11px;font-size:11.4px;line-height:14px;color:#111;font-weight:normal;">Maria</div>
<svg class="a" style="left:604px;top:339.96px;" width="10.5" height="10.5" viewBox="0 0 10.5 10.5" preserveAspectRatio="none"><path d="M5.2 1.6 H3 C2 1.6 1.4 2.2 1.4 3.2 V8.2 C1.4 9.2 2 9.8 3 9.8 H7.8 C8.8 9.8 9.4 9.2 9.4 8.2 V6.2" stroke="#111" stroke-width="1.5" fill="none" stroke-linecap="round"/><path d="M4.4 6.8 L9.4 1" stroke="#111" stroke-width="1.7" stroke-linecap="round"/></svg>
<svg class="a" style="left:633px;top:340.65999999999997px;" width="10.5" height="9" viewBox="0 0 10.5 9" preserveAspectRatio="none"><ellipse cx="5.2" cy="4.2" rx="4.9" ry="3.9" fill="#111"/><path d="M1.2 5.5 L0.4 8.8 L3.6 7.6Z" fill="#111"/><circle cx="3" cy="4.2" r="0.85" fill="#fff"/><circle cx="5.2" cy="4.2" r="0.85" fill="#fff"/><circle cx="7.4" cy="4.2" r="0.85" fill="#fff"/></svg>
<svg class="a" style="left:662.5px;top:343.96px;" width="10" height="2.4" viewBox="0 0 10 2.4" preserveAspectRatio="none"><circle cx="1.2" cy="1.2" r="1.15" fill="#111"/><circle cx="5" cy="1.2" r="1.15" fill="#111"/><circle cx="8.8" cy="1.2" r="1.15" fill="#111"/></svg>
<div class="a" style="left:704.30px;top:337.33px;font-size:12.2px;line-height:15px;color:#111;font-weight:normal;">+000 00 000 0000</div>
<div class="a" style="left:853.50px;top:338.74px;font-size:11.3px;line-height:14px;color:#111;font-weight:normal;">dddd@gmail.com</div>
<div class="a" style="left:1065px;top:345px;width:4px;height:1px;background:#111"></div>
<div class="a" style="left:1065px;top:346px;width:4px;height:1px;background:#9a9a9a"></div>
<div class="a" style="left:1272px;top:345px;width:4px;height:1px;background:#111"></div>
<div class="a" style="left:1272px;top:346px;width:4px;height:1px;background:#9a9a9a"></div>
<div class="a" style="left:1397px;top:345px;width:4px;height:1px;background:#111"></div>
<div class="a" style="left:1397px;top:346px;width:4px;height:1px;background:#9a9a9a"></div>
<div class="cb" style="left:382px;top:380.88px"></div>
<div class="a" style="left:401.00px;top:379.83px;font-size:11.4px;line-height:14px;color:#111;font-weight:normal;">Aidjadj</div>
<svg class="a" style="left:604px;top:381.68px;" width="10.5" height="10.5" viewBox="0 0 10.5 10.5" preserveAspectRatio="none"><path d="M5.2 1.6 H3 C2 1.6 1.4 2.2 1.4 3.2 V8.2 C1.4 9.2 2 9.8 3 9.8 H7.8 C8.8 9.8 9.4 9.2 9.4 8.2 V6.2" stroke="#111" stroke-width="1.5" fill="none" stroke-linecap="round"/><path d="M4.4 6.8 L9.4 1" stroke="#111" stroke-width="1.7" stroke-linecap="round"/></svg>
<svg class="a" style="left:633px;top:382.38px;" width="10.5" height="9" viewBox="0 0 10.5 9" preserveAspectRatio="none"><ellipse cx="5.2" cy="4.2" rx="4.9" ry="3.9" fill="#111"/><path d="M1.2 5.5 L0.4 8.8 L3.6 7.6Z" fill="#111"/><circle cx="3" cy="4.2" r="0.85" fill="#fff"/><circle cx="5.2" cy="4.2" r="0.85" fill="#fff"/><circle cx="7.4" cy="4.2" r="0.85" fill="#fff"/></svg>
<svg class="a" style="left:662.5px;top:385.68px;" width="10" height="2.4" viewBox="0 0 10 2.4" preserveAspectRatio="none"><circle cx="1.2" cy="1.2" r="1.15" fill="#111"/><circle cx="5" cy="1.2" r="1.15" fill="#111"/><circle cx="8.8" cy="1.2" r="1.15" fill="#111"/></svg>
<div class="a" style="left:704.30px;top:379.05px;font-size:12.2px;line-height:15px;color:#111;font-weight:normal;">+00 0000 000000</div>
<div class="a" style="left:853.50px;top:380.46px;font-size:11.3px;line-height:14px;color:#111;font-weight:normal;">dddd@gmail.com</div>
<div class="a" style="left:1065px;top:387px;width:4px;height:1px;background:#111"></div>
<div class="a" style="left:1065px;top:388px;width:4px;height:1px;background:#9a9a9a"></div>
<div class="a" style="left:1272px;top:387px;width:4px;height:1px;background:#111"></div>
<div class="a" style="left:1272px;top:388px;width:4px;height:1px;background:#9a9a9a"></div>
<div class="a" style="left:1397px;top:387px;width:4px;height:1px;background:#111"></div>
<div class="a" style="left:1397px;top:388px;width:4px;height:1px;background:#9a9a9a"></div>
<div class="cb" style="left:382px;top:422.60px"></div>
<div class="a" style="left:401.00px;top:421.55px;font-size:11.4px;line-height:14px;color:#111;font-weight:normal;">Jack</div>
<svg class="a" style="left:604px;top:423.40000000000003px;" width="10.5" height="10.5" viewBox="0 0 10.5 10.5" preserveAspectRatio="none"><path d="M5.2 1.6 H3 C2 1.6 1.4 2.2 1.4 3.2 V8.2 C1.4 9.2 2 9.8 3 9.8 H7.8 C8.8 9.8 9.4 9.2 9.4 8.2 V6.2" stroke="#111" stroke-width="1.5" fill="none" stroke-linecap="round"/><path d="M4.4 6.8 L9.4 1" stroke="#111" stroke-width="1.7" stroke-linecap="round"/></svg>
<svg class="a" style="left:633px;top:424.1px;" width="10.5" height="9" viewBox="0 0 10.5 9" preserveAspectRatio="none"><ellipse cx="5.2" cy="4.2" rx="4.9" ry="3.9" fill="#111"/><path d="M1.2 5.5 L0.4 8.8 L3.6 7.6Z" fill="#111"/><circle cx="3" cy="4.2" r="0.85" fill="#fff"/><circle cx="5.2" cy="4.2" r="0.85" fill="#fff"/><circle cx="7.4" cy="4.2" r="0.85" fill="#fff"/></svg>
<svg class="a" style="left:662.5px;top:427.40000000000003px;" width="10" height="2.4" viewBox="0 0 10 2.4" preserveAspectRatio="none"><circle cx="1.2" cy="1.2" r="1.15" fill="#111"/><circle cx="5" cy="1.2" r="1.15" fill="#111"/><circle cx="8.8" cy="1.2" r="1.15" fill="#111"/></svg>
<div class="a" style="left:704.30px;top:420.10px;font-size:12.7px;line-height:16px;color:#111;font-weight:normal;">(000) 000-0000</div>
<div class="a" style="left:855px;top:428px;width:4px;height:1px;background:#111"></div>
<div class="a" style="left:855px;top:429px;width:4px;height:1px;background:#9a9a9a"></div>
<div class="a" style="left:1065px;top:428px;width:4px;height:1px;background:#111"></div>
<div class="a" style="left:1065px;top:429px;width:4px;height:1px;background:#9a9a9a"></div>
<div class="a" style="left:1272px;top:428px;width:4px;height:1px;background:#111"></div>
<div class="a" style="left:1272px;top:429px;width:4px;height:1px;background:#9a9a9a"></div>
<div class="a" style="left:1397px;top:428px;width:4px;height:1px;background:#111"></div>
<div class="a" style="left:1397px;top:429px;width:4px;height:1px;background:#9a9a9a"></div>
<div class="cb" style="left:382px;top:464.32px"></div>
<div class="a" style="left:402px;top:470px;width:4px;height:1px;background:#111"></div>
<div class="a" style="left:402px;top:471px;width:4px;height:1px;background:#9a9a9a"></div>
<svg class="a" style="left:604px;top:465.12px;" width="10.5" height="10.5" viewBox="0 0 10.5 10.5" preserveAspectRatio="none"><path d="M5.2 1.6 H3 C2 1.6 1.4 2.2 1.4 3.2 V8.2 C1.4 9.2 2 9.8 3 9.8 H7.8 C8.8 9.8 9.4 9.2 9.4 8.2 V6.2" stroke="#111" stroke-width="1.5" fill="none" stroke-linecap="round"/><path d="M4.4 6.8 L9.4 1" stroke="#111" stroke-width="1.7" stroke-linecap="round"/></svg>
<svg class="a" style="left:633px;top:465.82px;" width="10.5" height="9" viewBox="0 0 10.5 9" preserveAspectRatio="none"><ellipse cx="5.2" cy="4.2" rx="4.9" ry="3.9" fill="#111"/><path d="M1.2 5.5 L0.4 8.8 L3.6 7.6Z" fill="#111"/><circle cx="3" cy="4.2" r="0.85" fill="#fff"/><circle cx="5.2" cy="4.2" r="0.85" fill="#fff"/><circle cx="7.4" cy="4.2" r="0.85" fill="#fff"/></svg>
<svg class="a" style="left:662.5px;top:469.12px;" width="10" height="2.4" viewBox="0 0 10 2.4" preserveAspectRatio="none"><circle cx="1.2" cy="1.2" r="1.15" fill="#111"/><circle cx="5" cy="1.2" r="1.15" fill="#111"/><circle cx="8.8" cy="1.2" r="1.15" fill="#111"/></svg>
<div class="a" style="left:704.30px;top:461.82px;font-size:12.7px;line-height:16px;color:#111;font-weight:normal;">(000) 000-0000</div>
<div class="a" style="left:855px;top:470px;width:4px;height:1px;background:#111"></div>
<div class="a" style="left:855px;top:471px;width:4px;height:1px;background:#9a9a9a"></div>
<div class="a" style="left:1065px;top:470px;width:4px;height:1px;background:#111"></div>
<div class="a" style="left:1065px;top:471px;width:4px;height:1px;background:#9a9a9a"></div>
<div class="a" style="left:1272px;top:470px;width:4px;height:1px;background:#111"></div>
<div class="a" style="left:1272px;top:471px;width:4px;height:1px;background:#9a9a9a"></div>
<div class="a" style="left:1397px;top:470px;width:4px;height:1px;background:#111"></div>
<div class="a" style="left:1397px;top:471px;width:4px;height:1px;background:#9a9a9a"></div>
<div class="cb" style="left:382px;top:506.04px"></div>
<div class="a" style="left:401.00px;top:504.99px;font-size:11.4px;line-height:14px;color:#111;font-weight:normal;">Corey</div>
<svg class="a" style="left:604px;top:506.84px;" width="10.5" height="10.5" viewBox="0 0 10.5 10.5" preserveAspectRatio="none"><path d="M5.2 1.6 H3 C2 1.6 1.4 2.2 1.4 3.2 V8.2 C1.4 9.2 2 9.8 3 9.8 H7.8 C8.8 9.8 9.4 9.2 9.4 8.2 V6.2" stroke="#111" stroke-width="1.5" fill="none" stroke-linecap="round"/><path d="M4.4 6.8 L9.4 1" stroke="#111" stroke-width="1.7" stroke-linecap="round"/></svg>
<svg class="a" style="left:633px;top:507.53999999999996px;" width="10.5" height="9" viewBox="0 0 10.5 9" preserveAspectRatio="none"><ellipse cx="5.2" cy="4.2" rx="4.9" ry="3.9" fill="#111"/><path d="M1.2 5.5 L0.4 8.8 L3.6 7.6Z" fill="#111"/><circle cx="3" cy="4.2" r="0.85" fill="#fff"/><circle cx="5.2" cy="4.2" r="0.85" fill="#fff"/><circle cx="7.4" cy="4.2" r="0.85" fill="#fff"/></svg>
<svg class="a" style="left:662.5px;top:510.84px;" width="10" height="2.4" viewBox="0 0 10 2.4" preserveAspectRatio="none"><circle cx="1.2" cy="1.2" r="1.15" fill="#111"/><circle cx="5" cy="1.2" r="1.15" fill="#111"/><circle cx="8.8" cy="1.2" r="1.15" fill="#111"/></svg>
<div class="a" style="left:704.30px;top:503.54px;font-size:12.7px;line-height:16px;color:#111;font-weight:normal;">(000) 000-0000</div>
<div class="a" style="left:853.50px;top:505.62px;font-size:11.3px;line-height:14px;color:#111;font-weight:normal;">dddd@gmail.com</div>
<div class="a" style="left:1065px;top:512px;width:4px;height:1px;background:#111"></div>
<div class="a" style="left:1065px;top:513px;width:4px;height:1px;background:#9a9a9a"></div>
<div class="a" style="left:1272px;top:512px;width:4px;height:1px;background:#111"></div>
<div class="a" style="left:1272px;top:513px;width:4px;height:1px;background:#9a9a9a"></div>
<div class="a" style="left:1397px;top:512px;width:4px;height:1px;background:#111"></div>
<div class="a" style="left:1397px;top:513px;width:4px;height:1px;background:#9a9a9a"></div>
<div class="cb" style="left:382px;top:547.76px"></div>
<div class="a" style="left:401.00px;top:546.71px;font-size:11.4px;line-height:14px;color:#111;font-weight:normal;">Paula</div>
<svg class="a" style="left:604px;top:548.56px;" width="10.5" height="10.5" viewBox="0 0 10.5 10.5" preserveAspectRatio="none"><path d="M5.2 1.6 H3 C2 1.6 1.4 2.2 1.4 3.2 V8.2 C1.4 9.2 2 9.8 3 9.8 H7.8 C8.8 9.8 9.4 9.2 9.4 8.2 V6.2" stroke="#111" stroke-width="1.5" fill="none" stroke-linecap="round"/><path d="M4.4 6.8 L9.4 1" stroke="#111" stroke-width="1.7" stroke-linecap="round"/></svg>
<svg class="a" style="left:633px;top:549.26px;" width="10.5" height="9" viewBox="0 0 10.5 9" preserveAspectRatio="none"><ellipse cx="5.2" cy="4.2" rx="4.9" ry="3.9" fill="#111"/><path d="M1.2 5.5 L0.4 8.8 L3.6 7.6Z" fill="#111"/><circle cx="3" cy="4.2" r="0.85" fill="#fff"/><circle cx="5.2" cy="4.2" r="0.85" fill="#fff"/><circle cx="7.4" cy="4.2" r="0.85" fill="#fff"/></svg>
<svg class="a" style="left:662.5px;top:552.56px;" width="10" height="2.4" viewBox="0 0 10 2.4" preserveAspectRatio="none"><circle cx="1.2" cy="1.2" r="1.15" fill="#111"/><circle cx="5" cy="1.2" r="1.15" fill="#111"/><circle cx="8.8" cy="1.2" r="1.15" fill="#111"/></svg>
<div class="a" style="left:704.30px;top:545.26px;font-size:12.7px;line-height:16px;color:#111;font-weight:normal;">(000) 000-0000</div>
<div class="a" style="left:853.50px;top:547.34px;font-size:11.3px;line-height:14px;color:#111;font-weight:normal;">dddd@gmail.com</div>
<div class="a" style="left:1065px;top:554px;width:4px;height:1px;background:#111"></div>
<div class="a" style="left:1065px;top:555px;width:4px;height:1px;background:#9a9a9a"></div>
<div class="a" style="left:1272px;top:554px;width:4px;height:1px;background:#111"></div>
<div class="a" style="left:1272px;top:555px;width:4px;height:1px;background:#9a9a9a"></div>
<div class="a" style="left:1397px;top:554px;width:4px;height:1px;background:#111"></div>
<div class="a" style="left:1397px;top:555px;width:4px;height:1px;background:#9a9a9a"></div>
<div class="cb" style="left:382px;top:589.48px"></div>
<div class="a" style="left:402px;top:595px;width:4px;height:1px;background:#111"></div>
<div class="a" style="left:402px;top:596px;width:4px;height:1px;background:#9a9a9a"></div>
<svg class="a" style="left:604px;top:590.28px;" width="10.5" height="10.5" viewBox="0 0 10.5 10.5" preserveAspectRatio="none"><path d="M5.2 1.6 H3 C2 1.6 1.4 2.2 1.4 3.2 V8.2 C1.4 9.2 2 9.8 3 9.8 H7.8 C8.8 9.8 9.4 9.2 9.4 8.2 V6.2" stroke="#111" stroke-width="1.5" fill="none" stroke-linecap="round"/><path d="M4.4 6.8 L9.4 1" stroke="#111" stroke-width="1.7" stroke-linecap="round"/></svg>
<svg class="a" style="left:633px;top:590.98px;" width="10.5" height="9" viewBox="0 0 10.5 9" preserveAspectRatio="none"><ellipse cx="5.2" cy="4.2" rx="4.9" ry="3.9" fill="#111"/><path d="M1.2 5.5 L0.4 8.8 L3.6 7.6Z" fill="#111"/><circle cx="3" cy="4.2" r="0.85" fill="#fff"/><circle cx="5.2" cy="4.2" r="0.85" fill="#fff"/><circle cx="7.4" cy="4.2" r="0.85" fill="#fff"/></svg>
<svg class="a" style="left:662.5px;top:594.28px;" width="10" height="2.4" viewBox="0 0 10 2.4" preserveAspectRatio="none"><circle cx="1.2" cy="1.2" r="1.15" fill="#111"/><circle cx="5" cy="1.2" r="1.15" fill="#111"/><circle cx="8.8" cy="1.2" r="1.15" fill="#111"/></svg>
<div class="a" style="left:704.30px;top:586.98px;font-size:12.7px;line-height:16px;color:#111;font-weight:normal;">(000) 000-0000</div>
<div class="a" style="left:855px;top:595px;width:4px;height:1px;background:#111"></div>
<div class="a" style="left:855px;top:596px;width:4px;height:1px;background:#9a9a9a"></div>
<div class="a" style="left:1065px;top:595px;width:4px;height:1px;background:#111"></div>
<div class="a" style="left:1065px;top:596px;width:4px;height:1px;background:#9a9a9a"></div>
<div class="a" style="left:1272px;top:595px;width:4px;height:1px;background:#111"></div>
<div class="a" style="left:1272px;top:596px;width:4px;height:1px;background:#9a9a9a"></div>
<div class="a" style="left:1397px;top:595px;width:4px;height:1px;background:#111"></div>
<div class="a" style="left:1397px;top:596px;width:4px;height:1px;background:#9a9a9a"></div>
<div class="cb" style="left:382px;top:631.20px"></div>
<div class="a" style="left:401.00px;top:630.15px;font-size:11.4px;line-height:14px;color:#111;font-weight:normal;">Edward</div>
<svg class="a" style="left:604px;top:632.0px;" width="10.5" height="10.5" viewBox="0 0 10.5 10.5" preserveAspectRatio="none"><path d="M5.2 1.6 H3 C2 1.6 1.4 2.2 1.4 3.2 V8.2 C1.4 9.2 2 9.8 3 9.8 H7.8 C8.8 9.8 9.4 9.2 9.4 8.2 V6.2" stroke="#111" stroke-width="1.5" fill="none" stroke-linecap="round"/><path d="M4.4 6.8 L9.4 1" stroke="#111" stroke-width="1.7" stroke-linecap="round"/></svg>
<svg class="a" style="left:633px;top:632.7px;" width="10.5" height="9" viewBox="0 0 10.5 9" preserveAspectRatio="none"><ellipse cx="5.2" cy="4.2" rx="4.9" ry="3.9" fill="#111"/><path d="M1.2 5.5 L0.4 8.8 L3.6 7.6Z" fill="#111"/><circle cx="3" cy="4.2" r="0.85" fill="#fff"/><circle cx="5.2" cy="4.2" r="0.85" fill="#fff"/><circle cx="7.4" cy="4.2" r="0.85" fill="#fff"/></svg>
<svg class="a" style="left:662.5px;top:636.0px;" width="10" height="2.4" viewBox="0 0 10 2.4" preserveAspectRatio="none"><circle cx="1.2" cy="1.2" r="1.15" fill="#111"/><circle cx="5" cy="1.2" r="1.15" fill="#111"/><circle cx="8.8" cy="1.2" r="1.15" fill="#111"/></svg>
<div class="a" style="left:704.30px;top:628.70px;font-size:12.7px;line-height:16px;color:#111;font-weight:normal;">(000) 000-0000</div>
<div class="a" style="left:855px;top:637px;width:4px;height:1px;background:#111"></div>
<div class="a" style="left:855px;top:638px;width:4px;height:1px;background:#9a9a9a"></div>
<div class="a" style="left:1065px;top:637px;width:4px;height:1px;background:#111"></div>
<div class="a" style="left:1065px;top:638px;width:4px;height:1px;background:#9a9a9a"></div>
<div class="a" style="left:1272px;top:637px;width:4px;height:1px;background:#111"></div>
<div class="a" style="left:1272px;top:638px;width:4px;height:1px;background:#9a9a9a"></div>
<div class="a" style="left:1397px;top:637px;width:4px;height:1px;background:#111"></div>
<div class="a" style="left:1397px;top:638px;width:4px;height:1px;background:#9a9a9a"></div>
<div class="cb" style="left:382px;top:672.92px"></div>
<div class="a" style="left:401.00px;top:671.87px;font-size:11.4px;line-height:14px;color:#111;font-weight:normal;">Jack</div>
<svg class="a" style="left:604px;top:673.7199999999999px;" width="10.5" height="10.5" viewBox="0 0 10.5 10.5" preserveAspectRatio="none"><path d="M5.2 1.6 H3 C2 1.6 1.4 2.2 1.4 3.2 V8.2 C1.4 9.2 2 9.8 3 9.8 H7.8 C8.8 9.8 9.4 9.2 9.4 8.2 V6.2" stroke="#111" stroke-width="1.5" fill="none" stroke-linecap="round"/><path d="M4.4 6.8 L9.4 1" stroke="#111" stroke-width="1.7" stroke-linecap="round"/></svg>
<svg class="a" style="left:633px;top:674.42px;" width="10.5" height="9" viewBox="0 0 10.5 9" preserveAspectRatio="none"><ellipse cx="5.2" cy="4.2" rx="4.9" ry="3.9" fill="#111"/><path d="M1.2 5.5 L0.4 8.8 L3.6 7.6Z" fill="#111"/><circle cx="3" cy="4.2" r="0.85" fill="#fff"/><circle cx="5.2" cy="4.2" r="0.85" fill="#fff"/><circle cx="7.4" cy="4.2" r="0.85" fill="#fff"/></svg>
<svg class="a" style="left:662.5px;top:677.7199999999999px;" width="10" height="2.4" viewBox="0 0 10 2.4" preserveAspectRatio="none"><circle cx="1.2" cy="1.2" r="1.15" fill="#111"/><circle cx="5" cy="1.2" r="1.15" fill="#111"/><circle cx="8.8" cy="1.2" r="1.15" fill="#111"/></svg>
<div class="a" style="left:704.30px;top:670.42px;font-size:12.7px;line-height:16px;color:#111;font-weight:normal;">(000) 000-0000</div>
<div class="a" style="left:853.50px;top:672.50px;font-size:11.3px;line-height:14px;color:#111;font-weight:normal;">dddd@gmail.com</div>
<div class="a" style="left:1065px;top:679px;width:4px;height:1px;background:#111"></div>
<div class="a" style="left:1065px;top:680px;width:4px;height:1px;background:#9a9a9a"></div>
<div class="a" style="left:1272px;top:679px;width:4px;height:1px;background:#111"></div>
<div class="a" style="left:1272px;top:680px;width:4px;height:1px;background:#9a9a9a"></div>
<div class="a" style="left:1397px;top:679px;width:4px;height:1px;background:#111"></div>
<div class="a" style="left:1397px;top:680px;width:4px;height:1px;background:#9a9a9a"></div>
<svg class="a" style="left:1541px;top:170px;" width="8" height="6" viewBox="0 0 8 6" preserveAspectRatio="none"><path d="M4 0.5 L7.5 5.5 H0.5Z" fill="#777"/></svg>
<div class="a" style="left:1541.5px;top:180px;width:7px;height:63px;background:#8c8c8c;border:1px solid #666;border-radius:4px"></div>
<svg class="a" style="left:1541px;top:689px;" width="8" height="6" viewBox="0 0 8 6" preserveAspectRatio="none"><path d="M4 5.5 L7.5 0.5 H0.5Z" fill="#777"/></svg>
<div class="a" style="left:357px;top:698px;width:1193px;height:10px;background:#fbfbfb"></div>
<div class="a" style="left:357px;top:708px;width:1193px;height:1px;background:#ececee"></div>
<svg class="a" style="left:361px;top:700.5px;" width="6" height="7" viewBox="0 0 6 7" preserveAspectRatio="none"><path d="M0.5 3.5 L5.5 0.3 V6.7Z" fill="#777"/></svg>
<div class="a" style="left:371px;top:700px;width:665px;height:7px;background:#8c8c8c;border:1px solid #666;border-radius:4px"></div>
<svg class="a" style="left:1530px;top:700.5px;" width="6" height="7" viewBox="0 0 6 7" preserveAspectRatio="none"><path d="M5.5 3.5 L0.5 0.3 V6.7Z" fill="#777"/></svg>
<div class="a" style="left:987px;top:149px;width:439px;height:55px;background:#fff;border-radius:6px;box-shadow:0 2px 10px rgba(0,0,0,0.10),0 0 2px rgba(0,0,0,0.05)"></div>
<div class="a" style="left:1000px;top:161px;width:413px;height:30px;background:#fff;border:1px solid #e1e2e6;border-radius:5px"></div>
<div class="a" style="left:1007px;top:168px;width:40.5px;height:16px;background:#ececef;border-radius:3px"></div>
<div class="a" style="left:1013.80px;top:169.13px;font-size:10.3px;line-height:13px;color:#4f5461;font-weight:normal;">Name</div>
<div class="a" style="left:1057px;top:168px;width:42.5px;height:16px;background:#ececef;border-radius:3px"></div>
<div class="a" style="left:1063.20px;top:169.13px;font-size:10.3px;line-height:13px;color:#4f5461;font-weight:normal;">Phone</div>
<div class="a" style="left:1108.5px;top:168px;width:38.1px;height:16px;background:#ececef;border-radius:3px"></div>
<div class="a" style="left:1115.10px;top:169.20px;font-size:10.1px;line-height:13px;color:#4f5461;font-weight:normal;">Email</div>
<div class="a" style="left:1156px;top:168px;width:51.6px;height:16px;background:#ececef;border-radius:3px"></div>
<div class="a" style="left:1162.50px;top:169.03px;font-size:10.6px;line-height:13px;color:#4f5461;font-weight:normal;">Address</div>
<div class="a" style="left:1217.4px;top:168px;width:60.1px;height:16px;background:#ececef;border-radius:3px"></div>
<div class="a" style="left:1223.60px;top:169.03px;font-size:10.6px;line-height:13px;color:#1d2029;font-weight:normal;">Birth Date</div>
<div class="a" style="left:1348px;top:168px;width:27.7px;height:16px;background:#ececef;border-radius:3px"></div>
<div class="a" style="left:1354.00px;top:169.26px;font-size:10.5px;line-height:13px;color:#1d2029;font-weight:normal;">+ 7</div>
<svg class="a" style="left:1396px;top:173.5px;" width="7" height="5" viewBox="0 0 7 5" preserveAspectRatio="none"><path d="M0.8 0.8 L3.5 3.8 L6.2 0.8" stroke="#111" stroke-width="1.5" fill="none" stroke-linecap="round" stroke-linejoin="round"/></svg>
<div class="a" style="left:1000px;top:198px;width:205px;height:246px;background:#fff;border-radius:0 0 4px 4px;box-shadow:0 7px 12px rgba(0,0,0,0.17),0 0 2px rgba(0,0,0,0.08)"></div>
<div class="a" style="left:1007px;top:210px;width:191px;height:26px;background:#eef2fd;border-radius:5px"></div>
<svg class="a" style="left:1013px;top:218px;" width="10" height="10" viewBox="0 0 12 12" preserveAspectRatio="none"><circle cx="4.9" cy="4.9" r="3.6" fill="none" stroke="#333" stroke-width="1.7"/><path d="M7.6 7.6 L11 11" stroke="#333" stroke-width="1.9" stroke-linecap="round"/></svg>
<div class="a" style="left:1033.60px;top:215.74px;font-size:12px;line-height:15px;color:#6b7280;font-weight:normal;">Search</div>
<div class="a" style="left:1000px;top:238px;width:190px;height:206px;overflow:hidden">
<div class="cb" style="left:15.5px;top:12.00px"></div>
<div class="a" style="left:33.6px;top:10.57px;font-size:12.2px;line-height:15px;color:#1d2029">Select All</div>
<svg class="a" style="left:15.5px;top:38.60px" width="12" height="12" viewBox="0 0 12 12"><rect width="12" height="12" rx="3" fill="#2141d6"/><path d="M2.8 6.2 L5 8.4 L9.3 3.6" stroke="#fff" stroke-width="1.7" fill="none" stroke-linecap="round" stroke-linejoin="round"/></svg>
<div class="a" style="left:33.6px;top:37.17px;font-size:12.2px;line-height:15px;color:#1d2029">Address</div>
<div class="cb" style="left:15.5px;top:65.20px"></div>
<div class="a" style="left:33.6px;top:63.77px;font-size:12.2px;line-height:15px;color:#1d2029">Birth Date</div>
<svg class="a" style="left:15.5px;top:91.80px" width="12" height="12" viewBox="0 0 12 12"><rect width="12" height="12" rx="3" fill="#2141d6"/><path d="M2.8 6.2 L5 8.4 L9.3 3.6" stroke="#fff" stroke-width="1.7" fill="none" stroke-linecap="round" stroke-linejoin="round"/></svg>
<div class="a" style="left:33.6px;top:90.37px;font-size:12.2px;line-height:15px;color:#1d2029">Blocked</div>
<div class="cb" style="left:15.5px;top:118.40px"></div>
<div class="a" style="left:33.6px;top:116.97px;font-size:12.2px;line-height:15px;color:#1d2029">Default Channel Id</div>
<svg class="a" style="left:15.5px;top:145.00px" width="12" height="12" viewBox="0 0 12 12"><rect width="12" height="12" rx="3" fill="#2141d6"/><path d="M2.8 6.2 L5 8.4 L9.3 3.6" stroke="#fff" stroke-width="1.7" fill="none" stroke-linecap="round" stroke-linejoin="round"/></svg>
<div class="a" style="left:33.6px;top:143.57px;font-size:12.2px;line-height:15px;color:#1d2029">Email</div>
<svg class="a" style="left:15.5px;top:171.60px" width="12" height="12" viewBox="0 0 12 12"><rect width="12" height="12" rx="3" fill="#2141d6"/><path d="M2.8 6.2 L5 8.4 L9.3 3.6" stroke="#fff" stroke-width="1.7" fill="none" stroke-linecap="round" stroke-linejoin="round"/></svg>
<div class="a" style="left:33.6px;top:170.17px;font-size:12.2px;line-height:15px;color:#1d2029">External Id</div>
<svg class="a" style="left:15.5px;top:198.20px" width="12" height="12" viewBox="0 0 12 12"><rect width="12" height="12" rx="3" fill="#2141d6"/><path d="M2.8 6.2 L5 8.4 L9.3 3.6" stroke="#fff" stroke-width="1.7" fill="none" stroke-linecap="round" stroke-linejoin="round"/></svg>
<div class="a" style="left:33.6px;top:196.77px;font-size:12.2px;line-height:15px;color:#1d2029">Inserted At</div>
</div>
<svg class="a" style="left:1195px;top:240.5px;" width="8" height="6" viewBox="0 0 8 6" preserveAspectRatio="none"><path d="M4 0.5 L7.5 5.5 H0.5Z" fill="#777"/></svg>
<div class="a" style="left:1195.5px;top:252px;width:6.5px;height:101px;background:#8c8c8c;border:1px solid #6a6a6a;border-radius:4px"></div>
<svg class="a" style="left:1195px;top:435px;" width="8" height="6" viewBox="0 0 8 6" preserveAspectRatio="none"><path d="M4 5.5 L7.5 0.5 H0.5Z" fill="#777"/></svg>
<div class="a" style="left:163px;top:671px;width:2px;height:83px;background:#181b23"></div>
<div class="a" style="left:165px;top:671px;width:1px;height:84px;background:#6f7177"></div>
</body></html>
